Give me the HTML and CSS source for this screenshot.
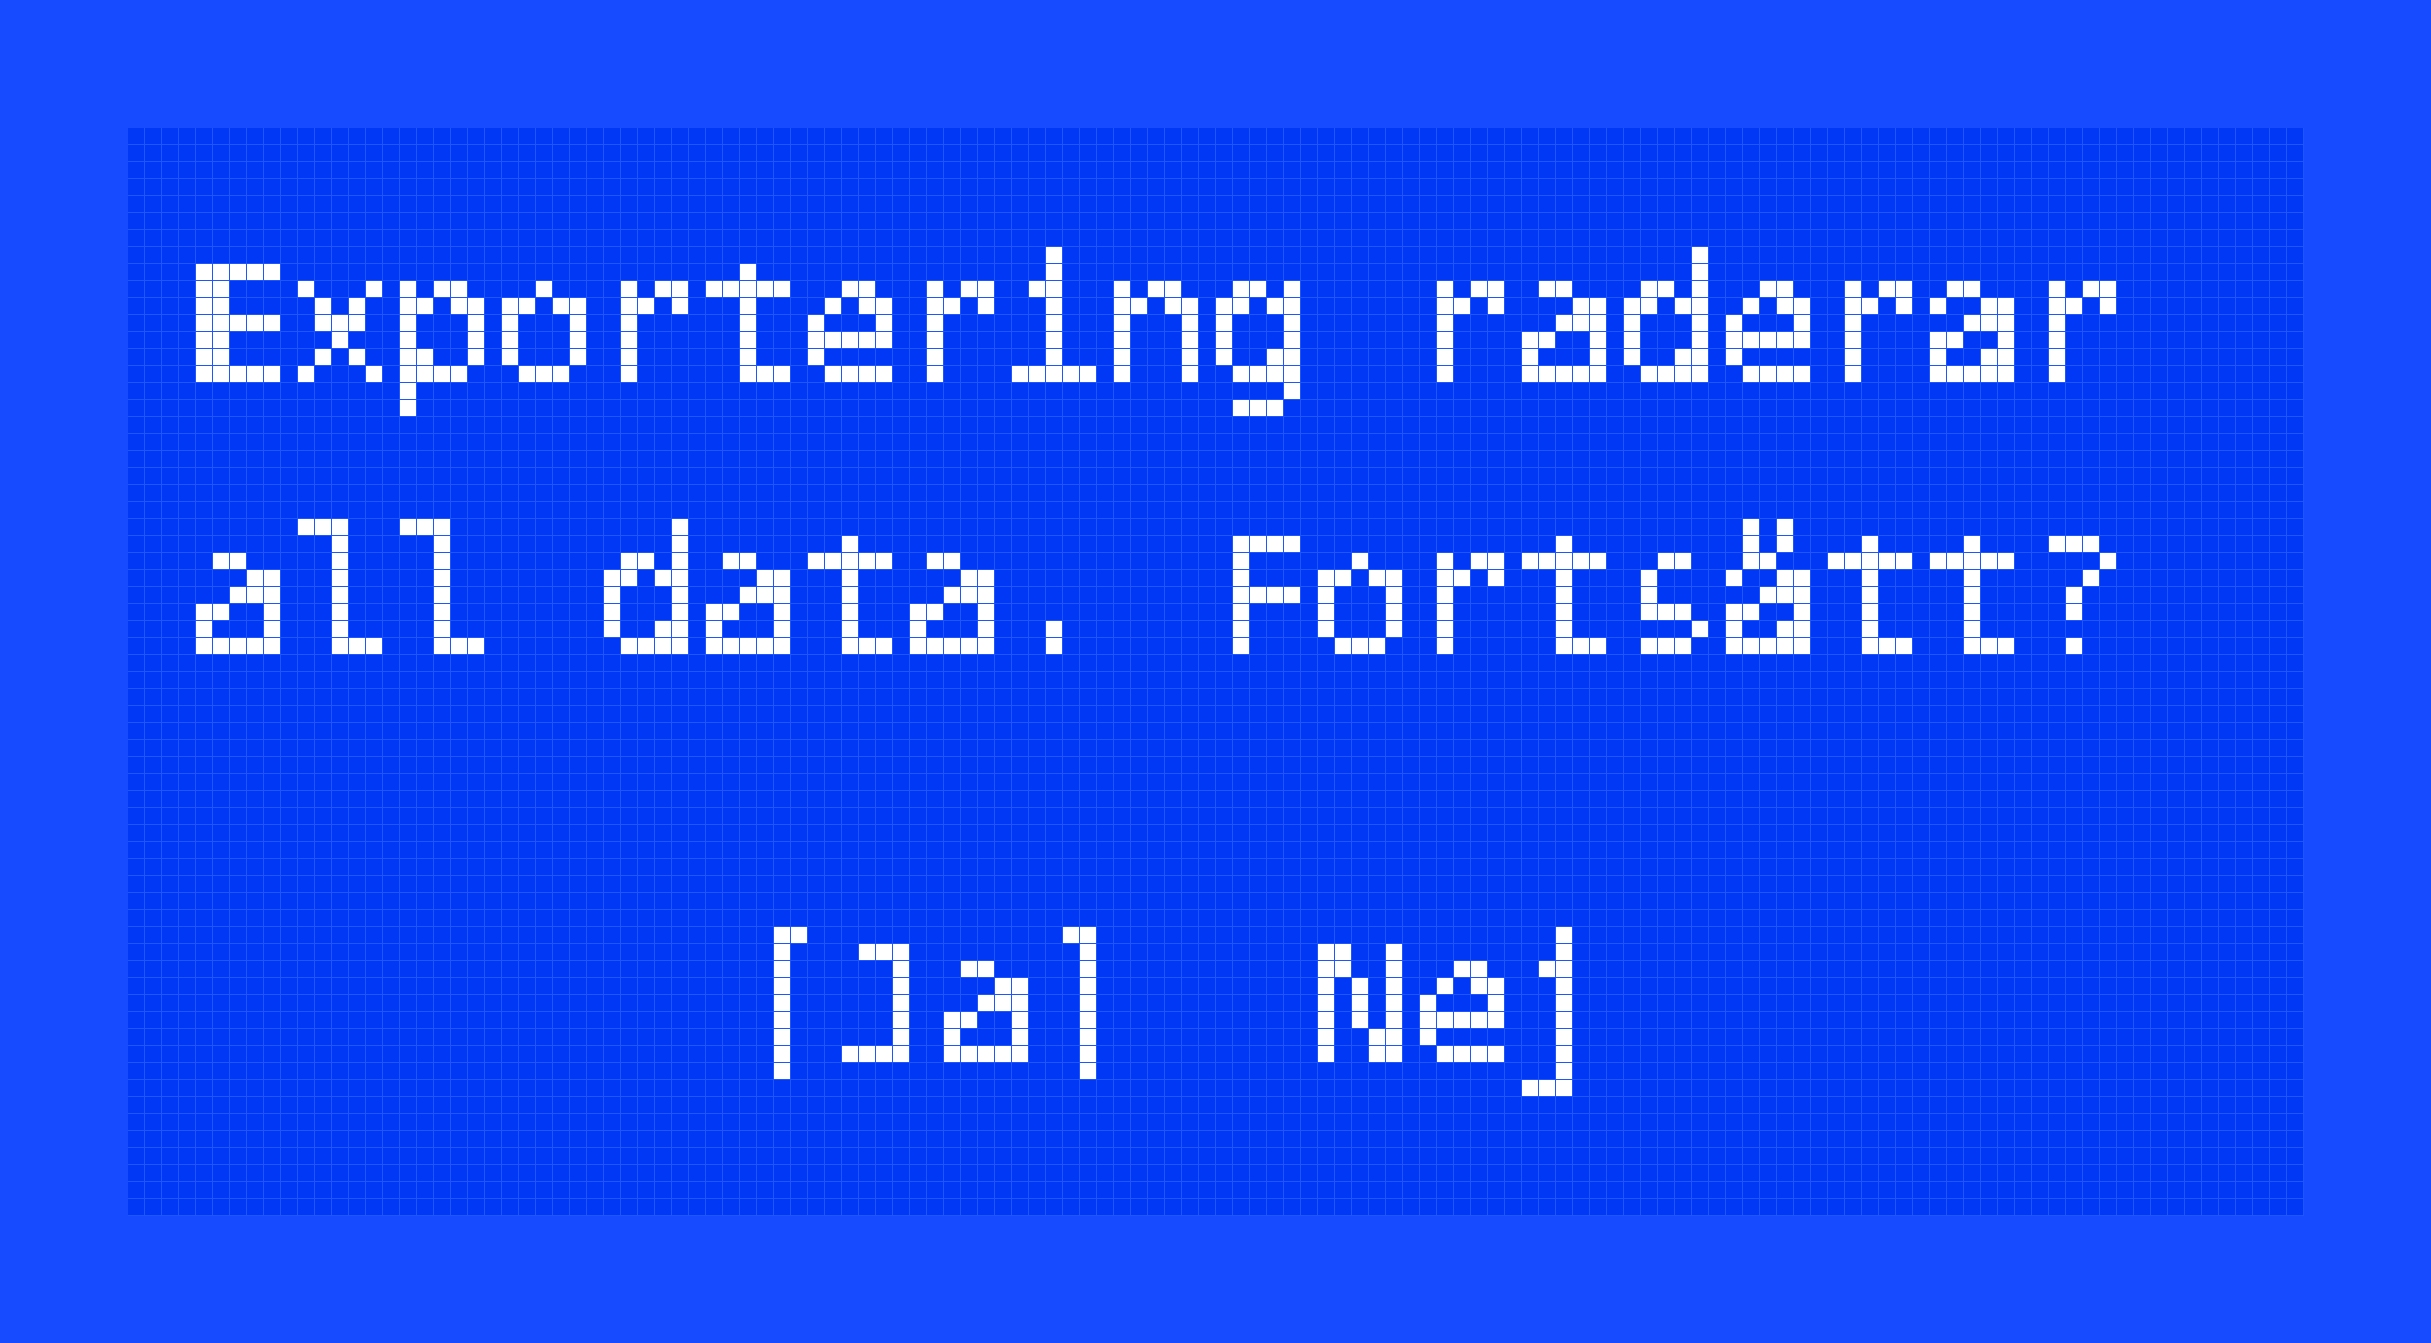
FILE: index.html
```
<!DOCTYPE html>
<html lang="sv">
<head>
<meta charset="utf-8">
<title>Export</title>
<link rel="stylesheet" href="styles.css">
</head>
<body>
<svg class="defs" width="0" height="0" aria-hidden="true">
  <filter id="dots" x="0" y="0" width="100%" height="100%" color-interpolation-filters="sRGB">
    <feMorphology in="SourceGraphic" operator="dilate" radius="0 1" result="thick"/>
    <feFlood x="8" y="8" width="1" height="1" flood-color="#ffffff" result="f"/>
    <feComposite in="f" in2="f" operator="over" x="0" y="0" width="17" height="17" result="cell"/>
    <feTile in="cell" result="grid"/>
    <feComposite in="thick" in2="grid" operator="in" result="samples"/>
    <feComponentTransfer in="samples" result="solid">
      <feFuncA type="discrete" tableValues="0 1"/>
    </feComponentTransfer>
    <feMorphology in="solid" operator="dilate" radius="8"/>
  </filter>
</svg>
<main class="screen">
  <div class="panel">
    <div class="text">
      <p class="line">Exportering raderar</p>
      <p class="line">all data. Fortsätt?</p>
      <div class="choices">
        <span class="choice">[Ja]</span>
        <span class="choice">Nej</span>
      </div>
    </div>
    <div class="grid" aria-hidden="true"></div>
  </div>
</main>
</body>
</html>
```
FILE: styles.css
```
html, body {
  margin: 0;
  padding: 0;
  background: #174bff;
}
.defs {
  display: block;
  width: 0;
  height: 0;
}
.screen {
  width: 2431px;
  height: 1343px;
  box-sizing: border-box;
  padding: 128px 0 0 128px;
}
.panel {
  position: relative;
  width: 2176px;
  height: 1088px;
  background: #0038f5;
}
.text {
  width: 100%;
  height: 100%;
  box-sizing: border-box;
  padding: 62px 0 0 60px;
  color: #ffffff;
  font-family: "DejaVu Sans Mono", "Liberation Mono", monospace;
  font-weight: 400;
  font-size: 169.42px;
  line-height: 272px;
  -webkit-text-stroke: 2px #ffffff;
  filter: url(#dots);
}
.line {
  margin: 0;
  white-space: pre;
}
.choices {
  display: flex;
  gap: 170px;
  margin-top: 136px;
  padding-left: 544px;
}
.choice {
  white-space: pre;
}
.grid {
  position: absolute;
  inset: 0;
  pointer-events: none;
  background-image:
    linear-gradient(to right, transparent 16px, #1f55ff 16px),
    linear-gradient(to bottom, transparent 16px, #1f55ff 16px);
  background-size: 17px 17px;
}
```
